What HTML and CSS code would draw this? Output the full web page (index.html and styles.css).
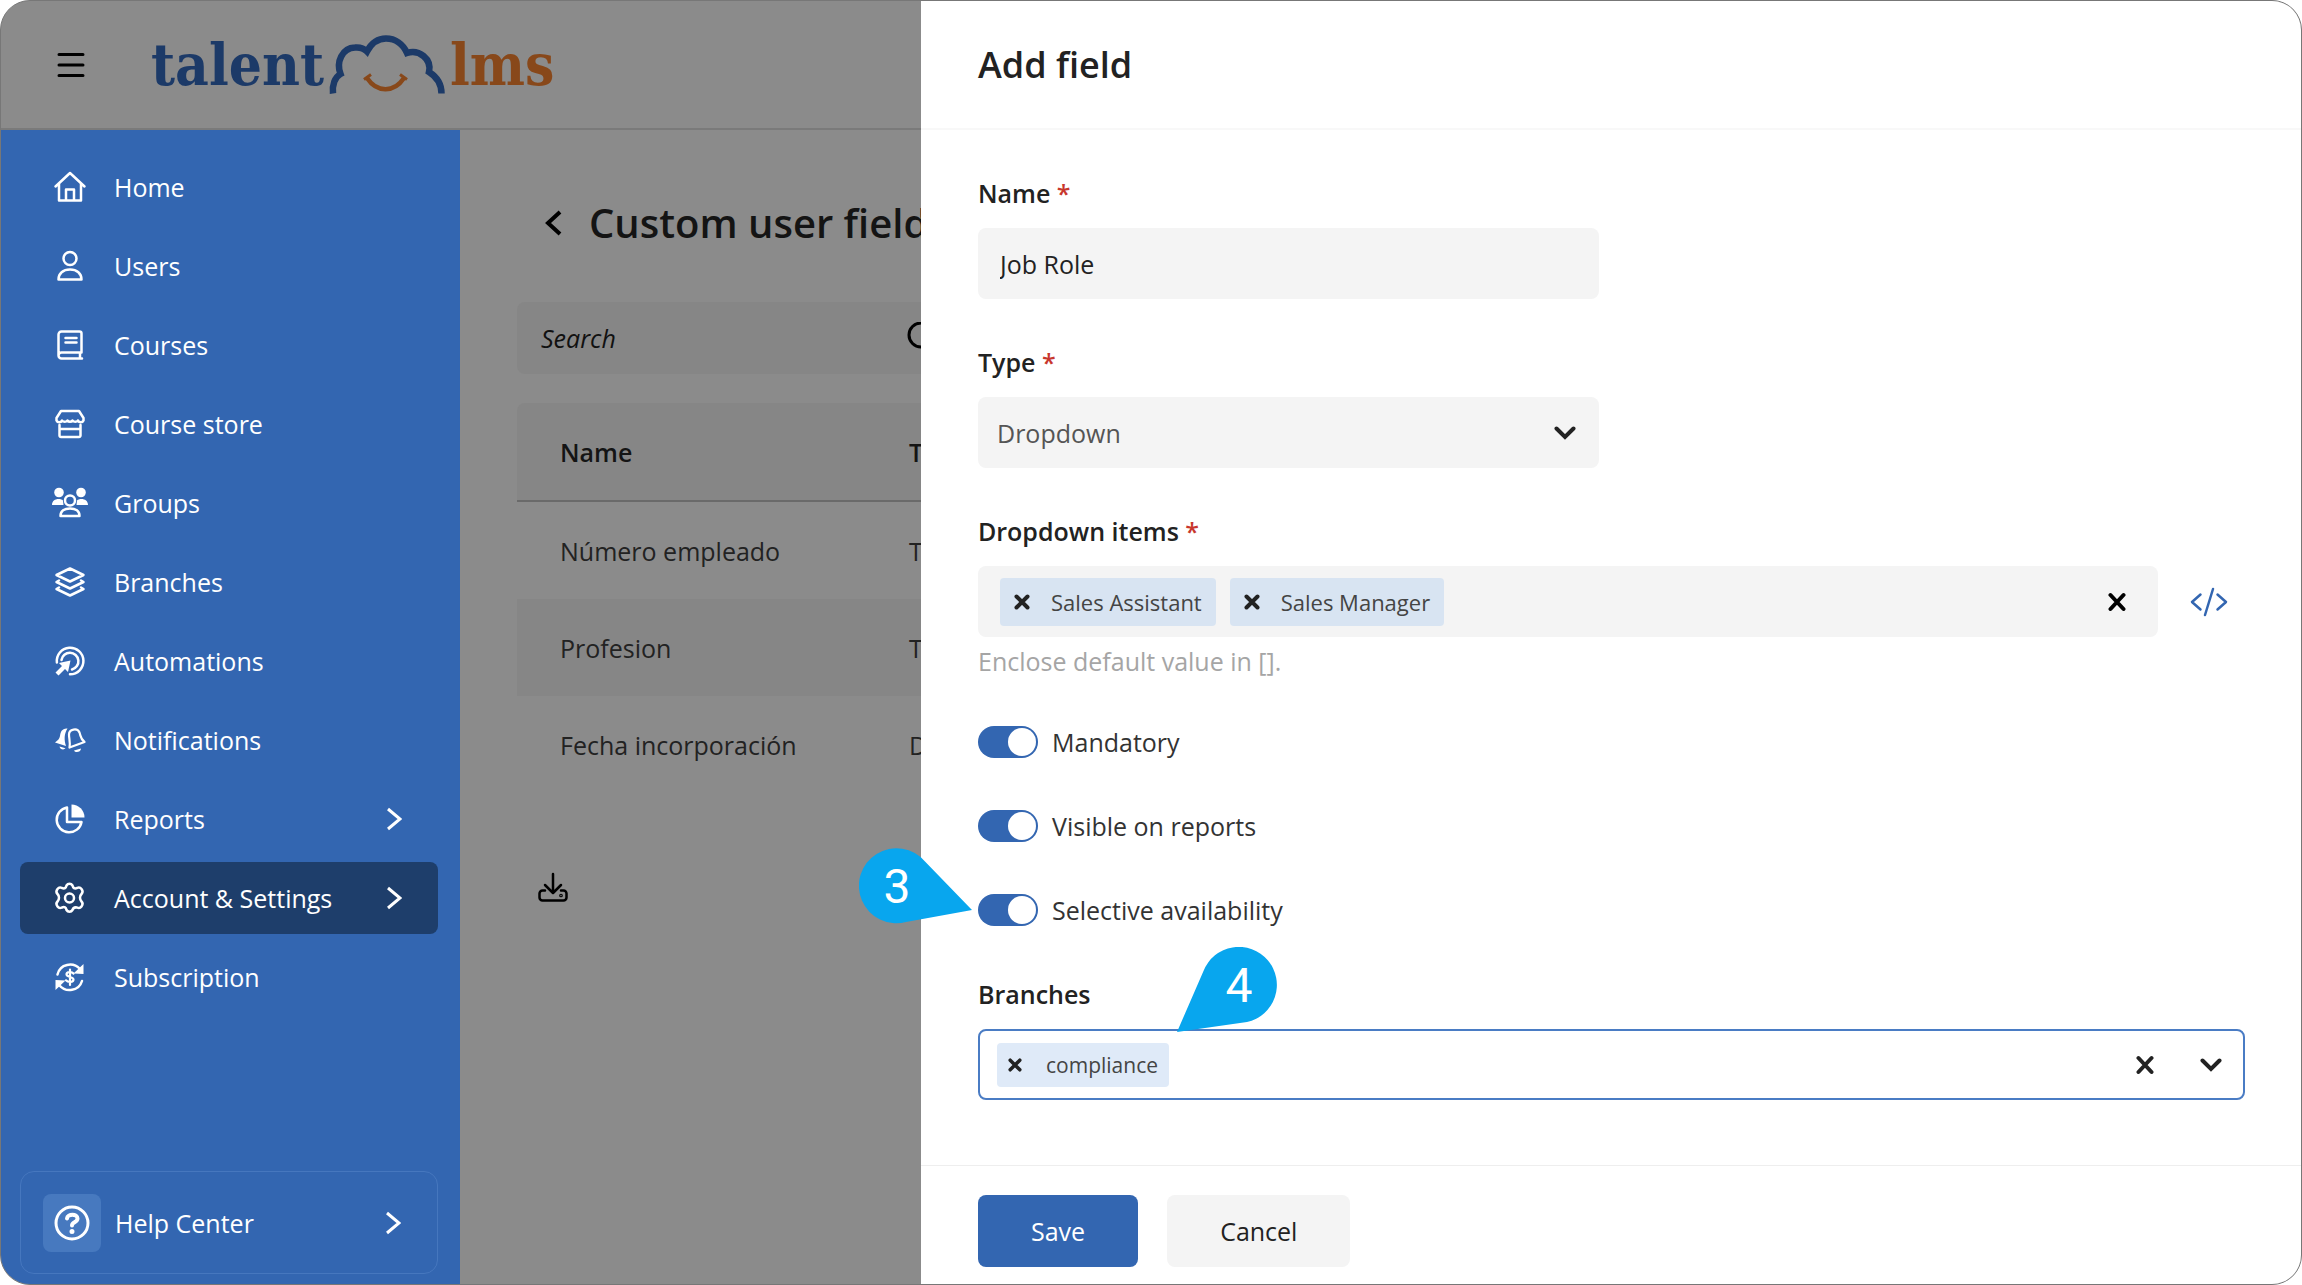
FILE: index.html
```html
<!DOCTYPE html>
<html lang="en">
<head>
    <meta charset="UTF-8">
    <meta name="viewport" content="width=device-width, initial-scale=1.0">
    <title>Custom user fields - TalentLMS</title>
    <link rel="stylesheet" href="styles.css">
</head>
<body>
    <div class="app">
        <header class="topbar">
            <button class="icon-btn" aria-label="Menu">
                <svg width="28" height="26" viewBox="0 0 28 26" fill="none" stroke="#000" stroke-width="3" stroke-linecap="round"><path d="M2 2.500h24M2 13h24M2 23.500h24"/></svg>
            </button>
            <a href="#" class="logo" aria-label="talentlms">
                <span class="logo-talent">talent</span>
                <svg width="120" height="60" viewBox="0 0 120 60" fill="none">
                    <path d="M6 58.500C5 50 8 42 13.500 39C9 27 15 13 28 12.500C33 12 37 13.500 40 16.500C45 7 52 3.500 59 3.500C68 3.500 76 9 80 18C92 14 105 24 102 37C110 42 114.500 49 114.500 58.500" stroke="#1c3a68" stroke-width="6.500"/>
                    <path d="M40 43C50 58 67 58 77 43" stroke="#88481a" stroke-width="4.500"/>
                    <path d="M37 44.500L44 39.500M80 44.500L73 39.500" stroke="#88481a" stroke-width="3"/>
                </svg>
                <span class="logo-lms">lms</span>
            </a>
        </header>

        <div class="body">
            <aside class="sidebar">
                <nav class="nav">
                    <a href="#" class="nav-item">
                        <svg class="nav-icon" viewBox="0 0 36 36"><path d="M3.500 17.500L18 4l14.500 13.500M7 15v16.500h22V15M14 31.500V20.500h8v11"/></svg>
                        <span>Home</span>
                    </a>
                    <a href="#" class="nav-item">
                        <svg class="nav-icon" viewBox="0 0 36 36"><circle cx="18" cy="10.500" r="6.500"/><path d="M6.500 31.500c0-6 4.500-10 11.500-10s11.500 4 11.500 10z"/></svg>
                        <span>Users</span>
                    </a>
                    <a href="#" class="nav-item">
                        <svg class="nav-icon" viewBox="0 0 36 36"><path d="M29.500 25.500V6.500a2 2 0 0 0-2-2h-18a3 3 0 0 0-3 3v21a3 3 0 0 0 3 3h20.500M29.500 25.500h-20a3 3 0 0 0-3 3M28 25.500v6M13.500 11h11M13.500 15.500h11"/></svg>
                        <span>Courses</span>
                    </a>
                    <a href="#" class="nav-item">
                        <svg class="nav-icon" viewBox="0 0 36 36"><path d="M9 5h18l4.500 7v2.500a3 3 0 0 1-5.500 0a3.500 3.500 0 0 1-5.500 0a3 3 0 0 1-5 0a3.500 3.500 0 0 1-5.500 0a3 3 0 0 1-5.500 0V12zM7.500 19v10.500a1.500 1.500 0 0 0 1.500 1.500h18a1.500 1.500 0 0 0 1.500-1.500V19M7.500 23h21"/></svg>
                        <span>Course store</span>
                    </a>
                    <a href="#" class="nav-item">
                        <svg class="nav-icon" viewBox="0 0 36 36"><g fill="#fff" stroke="none"><circle cx="7" cy="7.500" r="4.800"/><circle cx="29" cy="7.500" r="4.800"/><path d="M0 20c0-4 3-6 6.500-6c2 0 3.500.5 4.500 1.500L11.500 20zM36 20c0-4-3-6-6.500-6c-2 0-3.500.5-4.500 1.500L24.500 20z"/></g><circle cx="18" cy="15.500" r="5"/><path d="M8.500 31c0-5 4-7.500 9.500-7.500s9.500 2.500 9.500 7.500z"/></svg>
                        <span>Groups</span>
                    </a>
                    <a href="#" class="nav-item">
                        <svg class="nav-icon" viewBox="0 0 36 36"><path d="M18 4.500l13.500 6.500L18 17.500L4.500 11zM7 16.500l-2.500 1.500L18 24.500L31.500 18L29 16.500M7 23.500L4.500 25L18 31.500L31.500 25L29 23.500"/></svg>
                        <span>Branches</span>
                    </a>
                    <a href="#" class="nav-item">
                        <svg class="nav-icon" viewBox="0 0 36 36"><path d="M4.900 19.500A13.300 13.300 0 1 1 18 31.300M9.500 17a8.500 8.500 0 1 1 10.500 9.500"/><path d="M18.500 17.500L16 29l-3-3l-6.500 6.500l-3-3L10 23l-3-3z" fill="#fff" stroke="none"/></svg>
                        <span>Automations</span>
                    </a>
                    <a href="#" class="nav-item">
                        <svg class="nav-icon" viewBox="0 0 36 36"><path d="M15.500 6.500C10 6 8.500 10 8 14c-.5 3-2.500 4.500-5 6.500l11 3.500c-2-6-2-12 1.500-17.500zM7.500 24.500l6 1.800c-1.500 2-5.500 1.300-6-1.800zM22 28.500l7-2c0 3.500-5.500 5-7 2z" fill="#fff" stroke="none"/><path d="M17 12.500c0-5.500 8.500-7 10.500-2c1.500 4.500 1 6.500 5 9.500L17.500 25.500C18.500 20.500 17 16.500 17 12.500z" stroke-width="2.200"/></svg>
                        <span>Notifications</span>
                    </a>
                    <a href="#" class="nav-item">
                        <svg class="nav-icon" viewBox="0 0 36 36"><path d="M15 6.500A12.500 12.500 0 1 0 29.500 21H15z"/><path d="M19.500 3.500A13 13 0 0 1 32.500 16.500h-13z" fill="#fff" stroke="none"/></svg>
                        <span>Reports</span>
                        <svg class="nav-arrow" viewBox="0 0 16 24"><path d="M2 2l12 10L2 22"/></svg>
                    </a>
                    <a href="#" class="nav-item active">
                        <svg class="nav-icon" viewBox="0 0 36 36"><path d="M14.500 5.500a3.500 3.500 0 0 1 6 0c.5 2.500 2 3.500 4.500 2.500a3.500 3.500 0 0 1 4.500 1c1.500 2 1.500 3.500 0 5c-2 2-2 5.500 0 7.500c1.500 1.500 1.500 3 0 5a3.500 3.500 0 0 1-4.500 1c-2.500-.5-4 .5-4.500 2.500a3.500 3.500 0 0 1-6 0c-.5-2.500-2-3.500-4.500-2.500a3.500 3.500 0 0 1-4.500-1c-1.500-2-1.500-3.500 0-5c2-2 2-5.500 0-7.500c-1.500-1.500-1.500-3 0-5a3.500 3.500 0 0 1 4.500-1c2.500 1 4 0 4.500-2.500z"/><circle cx="17.500" cy="18" r="4.500"/></svg>
                        <span>Account &amp; Settings</span>
                        <svg class="nav-arrow" viewBox="0 0 16 24"><path d="M2 2l12 10L2 22"/></svg>
                    </a>
                    <a href="#" class="nav-item">
                        <svg class="nav-icon" viewBox="0 0 36 36"><path d="M5.500 15.500C8 5 21 2.500 28 10M30 22C27 32 14 34 7.500 26.500"/><path d="M31.500 5v10l-10-.5zM3.500 31V21l10 .5z" fill="#fff" stroke="none"/><path d="M21.500 14.500c-1.500-2-7-2-7 .8c0 3.200 7 2.200 7 5.200c0 3-5.500 3-7.500.8M18 10.500v15.500" stroke-width="2.200"/></svg>
                        <span>Subscription</span>
                    </a>
                </nav>
                <a href="#" class="help">
                    <span class="help-icon">
                        <svg width="36" height="36" viewBox="0 0 36 36" fill="none" stroke="#fff" stroke-linecap="round"><circle cx="18" cy="18" r="16" stroke-width="3"/><path d="M13 13.500c.5-5 10.500-5 10.500 0c0 4-5.500 3.500-5.500 7" stroke-width="4"/><circle cx="18" cy="26.500" r="1.500" fill="#fff" stroke-width="2"/></svg>
                    </span>
                    <span>Help Center</span>
                    <svg class="nav-arrow" viewBox="0 0 16 24"><path d="M2 2l12 10L2 22"/></svg>
                </a>
            </aside>

            <main class="content">
                <div class="page-title">
                    <button class="icon-btn" aria-label="Back">
                        <svg width="18" height="26" viewBox="0 0 18 26" fill="none" stroke="#000" stroke-width="4"><path d="M16 2L4 13l12 11"/></svg>
                    </button>
                    <h1>Custom user fields</h1>
                </div>
                <div class="search">
                    <input type="search" class="search-input" placeholder="Search" aria-label="Search">
                    <svg width="32" height="32" viewBox="0 0 32 32" fill="none" stroke="#000" stroke-width="3"><circle cx="14" cy="13" r="12"/><path d="M22 22l8 8"/></svg>
                </div>
                <table class="fields-table">
                    <thead>
                        <tr><th>Name</th><th>Type</th></tr>
                    </thead>
                    <tbody>
                        <tr><td>Número empleado</td><td>Text</td></tr>
                        <tr><td>Profesion</td><td>Text</td></tr>
                        <tr><td>Fecha incorporación</td><td>Date</td></tr>
                    </tbody>
                </table>
                <button class="icon-btn download" aria-label="Download">
                    <svg width="30" height="30" viewBox="0 0 30 30" fill="none" stroke="#000" stroke-width="2.500" stroke-linecap="round" stroke-linejoin="round"><path d="M15 2v18M7 13l8 8l8-8M7 18.500H4.500a3 3 0 0 0-3 3v4a3 3 0 0 0 3 3h21a3 3 0 0 0 3-3v-4a3 3 0 0 0-3-3H23"/><circle cx="23" cy="23.500" r=".6"/></svg>
                </button>
            </main>
        </div>

        <!-- Add field drawer -->
        <section class="drawer" role="dialog" aria-labelledby="drawerTitle">
            <div class="drawer-header">
                <h2 id="drawerTitle">Add field</h2>
            </div>
            <form class="drawer-body">
                <div class="field half">
                    <label for="name">Name <span class="required">*</span></label>
                    <input type="text" id="name" class="control" value="Job Role">
                </div>
                <div class="field half">
                    <label for="type">Type <span class="required">*</span></label>
                    <div class="select-wrap">
                        <select id="type" class="control">
                            <option>Dropdown</option>
                        </select>
                        <svg class="select-arrow" width="22" height="14" viewBox="0 0 22 14" fill="none" stroke="#222" stroke-width="4" stroke-linecap="round"><path d="M2.500 2.500L11 11l8.500-8.500"/></svg>
                    </div>
                </div>
                <div class="field">
                    <label for="items">Dropdown items <span class="required">*</span></label>
                    <div class="tag-row">
                        <div class="tag-box">
                            <span class="tag"><button type="button" class="icon-btn" aria-label="Remove Sales Assistant"><svg class="x-small" viewBox="0 0 16 16"><path d="M2.500 2.500l11 11M13.500 2.500l-11 11"/></svg></button>Sales Assistant</span>
                            <span class="tag"><button type="button" class="icon-btn" aria-label="Remove Sales Manager"><svg class="x-small" viewBox="0 0 16 16"><path d="M2.500 2.500l11 11M13.500 2.500l-11 11"/></svg></button>Sales Manager</span>
                            <input type="text" id="items" class="tag-input">
                            <button type="button" class="icon-btn clear" aria-label="Clear items"><svg class="x-large" viewBox="0 0 18 20"><path d="M2.500 3l13 14M15.500 3l-13 14"/></svg></button>
                        </div>
                        <button type="button" class="icon-btn code" aria-label="Edit as code">
                            <svg width="38" height="30" viewBox="0 0 38 30" fill="none" stroke="#3366b1" stroke-width="2.500" stroke-linecap="round" stroke-linejoin="round"><path d="M10.500 7.500L2 15l8.500 7.500M27.500 7.500L36 15l-8.500 7.500M23 2l-8 26"/></svg>
                        </button>
                    </div>
                    <p class="hint">Enclose default value in [].</p>
                </div>
                <label class="toggle"><input type="checkbox" checked><span>Mandatory</span></label>
                <label class="toggle"><input type="checkbox" checked><span>Visible on reports</span></label>
                <label class="toggle">
                    <input type="checkbox" checked><span>Selective availability</span>
                    <svg class="callout callout-3" width="113" height="76" viewBox="0 0 113 76" aria-hidden="true">
                        <path d="M113 62L66 13.500A37.500 37.500 0 1 0 47 74z" fill="#08a6ee"/>
                        <text x="38" y="55" text-anchor="middle">3</text>
                    </svg>
                </label>
                <div class="field branches">
                    <label for="branches">Branches</label>
                    <div class="tag-box focused">
                        <span class="tag"><button type="button" class="icon-btn" aria-label="Remove compliance"><svg class="x-small" viewBox="0 0 16 16"><path d="M2.500 2.500l11 11M13.500 2.500l-11 11"/></svg></button>compliance</span>
                        <input type="text" id="branches" class="tag-input">
                        <button type="button" class="icon-btn" aria-label="Clear branches"><svg class="x-large" viewBox="0 0 18 20"><path d="M2.500 3l13 14M15.500 3l-13 14"/></svg></button>
                        <button type="button" class="icon-btn" aria-label="Show branches"><svg width="22" height="14" viewBox="0 0 22 14" fill="none" stroke="#222" stroke-width="4" stroke-linecap="round"><path d="M2.500 2.500L11 11l8.500-8.500"/></svg></button>
                    </div>
                    <svg class="callout callout-4" width="102" height="85" viewBox="0 0 102 85" aria-hidden="true">
                        <path d="M0 85L26.500 24A38 38 0 1 1 70 75z" fill="#08a6ee"/>
                        <text x="62" y="55" text-anchor="middle">4</text>
                    </svg>
                </div>
            </form>
            <div class="drawer-footer">
                <button class="btn btn-save">Save</button>
                <button class="btn btn-cancel">Cancel</button>
            </div>
        </section>
    </div>
</body>
</html>
```
FILE: styles.css
```css
* {
    margin: 0;
    padding: 0;
    box-sizing: border-box;
}

body {
    background: #fff;
    color: #222;
    font-family: "Open Sans", "Noto Sans", sans-serif;
    font-size: 25px;
    line-height: 36px;
}

button,
input,
select {
    font: inherit;
    color: inherit;
    border: none;
    background: none;
}

a {
    color: inherit;
    text-decoration: none;
}

svg {
    flex: none;
}

.app {
    position: relative;
    display: flex;
    flex-direction: column;
    min-height: 100vh;
    background: #8b8b8b;
    border: 1px solid #777;
    border-radius: 30px;
    overflow: hidden;
}

.icon-btn {
    display: flex;
    align-items: center;
    justify-content: center;
    cursor: pointer;
}

/* Top bar */
.topbar {
    display: flex;
    align-items: center;
    gap: 66px;
    height: 129px;
    padding: 0 56px;
    border-bottom: 2px solid #7a7a7a;
}

.logo {
    display: flex;
    align-items: center;
    gap: 3px;
    font-family: "DejaVu Serif Condensed", "DejaVu Serif", serif;
    font-weight: 700;
    font-size: 58px;
    line-height: 64px;
}

.logo-talent {
    color: #1c3a68;
}

.logo-lms {
    color: #88481a;
}

.body {
    flex: 1;
    display: flex;
}

/* Sidebar */
.sidebar {
    flex: none;
    display: flex;
    flex-direction: column;
    justify-content: space-between;
    width: calc(20% - 1px);
    padding: 21px 22px 10px 19px;
    background: #3366b1;
    color: #fff;
}

.nav {
    display: flex;
    flex-direction: column;
    gap: 7px;
}

.nav-item {
    display: flex;
    align-items: center;
    gap: 26px;
    height: 72px;
    padding: 0 36px 0 32px;
    border-radius: 8px;
}

.nav-item.active {
    background: #1e3e6b;
}

.nav-icon {
    width: 36px;
    height: 36px;
    fill: none;
    stroke: #fff;
    stroke-width: 2.5;
    stroke-linejoin: round;
    stroke-linecap: round;
}

.nav-arrow {
    width: 16px;
    height: 24px;
    margin-left: auto;
    fill: none;
    stroke: #fff;
    stroke-width: 3;
}

.help {
    display: flex;
    align-items: center;
    gap: 14px;
    height: 103px;
    padding: 0 36px 0 22px;
    border: 1px solid #4677be;
    border-radius: 14px;
}

.help-icon {
    display: flex;
    align-items: center;
    justify-content: center;
    width: 58px;
    height: 58px;
    background: #4779bf;
    border-radius: 8px;
}

/* Custom fields page */
.content {
    flex: 1;
    padding: 63px 57px;
}

.page-title {
    display: flex;
    align-items: center;
    gap: 27px;
    height: 60px;
    margin-bottom: 49px;
    padding-left: 27px;
}

.page-title h1 {
    font-size: 40px;
    font-weight: 600;
    line-height: 60px;
    color: #141414;
}

.search {
    display: flex;
    align-items: center;
    width: 446px;
    height: 72px;
    padding: 0 24px;
    background: #868686;
    border-radius: 8px;
}

.search-input {
    flex: 1;
    min-width: 0;
    font-style: italic;
}

.search-input::placeholder {
    color: #111;
}

.fields-table {
    width: 100%;
    margin-top: 29px;
    border-collapse: separate;
    border-spacing: 0;
    table-layout: fixed;
    color: #222;
}

.fields-table th,
.fields-table td {
    height: 97px;
    padding: 0 43px;
    text-align: left;
}

.fields-table th:first-child {
    width: 349px;
    border-top-left-radius: 8px;
}

.fields-table th {
    height: 99px;
    font-weight: 600;
    color: #141414;
    background: #868686;
    border-bottom: 2px solid #6a6a6a;
}

.fields-table tbody tr:nth-child(even) {
    background: #868686;
}

.download {
    margin: 79px 0 0 21px;
}

/* Drawer */
.drawer {
    position: absolute;
    top: 0;
    right: 0;
    bottom: 0;
    display: flex;
    flex-direction: column;
    width: 60%;
    background: #fff;
}

.drawer-header {
    display: flex;
    align-items: center;
    height: 129px;
    padding: 0 57px;
    border-bottom: 2px solid #f8f8f8;
}

.drawer-header h2 {
    font-size: 36px;
    font-weight: 600;
}

.drawer-body {
    flex: 1;
    padding: 45px 56px 0 57px;
}

.field {
    margin-bottom: 45px;
}

.field.half {
    width: 49%;
}

.field label {
    display: block;
    margin-bottom: 17px;
    font-weight: 600;
}

.required {
    color: #c8372d;
}

.control {
    display: block;
    width: 100%;
    height: 71px;
    padding: 0 22px;
    background: #f4f4f4;
    border-radius: 8px;
}

.select-wrap {
    position: relative;
}

select.control {
    appearance: none;
    padding: 0 19px;
    color: #555;
}

.select-arrow {
    position: absolute;
    top: 29px;
    right: 23px;
    pointer-events: none;
}

.tag-row {
    display: flex;
    align-items: center;
    gap: 32px;
}

.tag-box {
    flex: 1;
    display: flex;
    align-items: center;
    gap: 14px;
    height: 71px;
    padding: 0 32px 0 22px;
    background: #f4f4f4;
    border-radius: 8px;
}

.tag {
    display: flex;
    align-items: center;
    gap: 21px;
    height: 48px;
    padding: 0 14px;
    background: #d8e4f2;
    border-radius: 4px;
    font-size: 22px;
    color: #444;
}

.tag-input {
    flex: 1;
    min-width: 0;
}

.x-small,
.x-large {
    width: 16px;
    height: 16px;
    fill: none;
    stroke: #222;
    stroke-width: 4;
    stroke-linecap: round;
}

.x-large {
    width: 18px;
    height: 20px;
}

.clear svg {
    stroke: #000;
}

.code {
    margin-right: 17px;
}

.hint {
    margin-top: 6px;
    color: #a5a5a5;
}

.toggle {
    position: relative;
    display: flex;
    align-items: center;
    gap: 14px;
    margin-bottom: 48px;
    color: #333;
}

.toggle input {
    appearance: none;
    display: flex;
    justify-content: flex-end;
    align-items: center;
    width: 60px;
    height: 32px;
    padding: 2px;
    background: #3366b1;
    border-radius: 16px;
}

.toggle input::before {
    content: "";
    width: 28px;
    height: 28px;
    background: #fff;
    border-radius: 50%;
}

.branches {
    position: relative;
}

.tag-box.focused {
    gap: 46px;
    padding: 0 21px 0 17px;
    background: #fff;
    border: 2px solid #4a7cc4;
}

.focused .tag {
    gap: 24px;
    height: 44px;
    padding: 0 11px;
    background: #dfeaf8;
    font-size: 21px;
}

.focused .x-small {
    width: 14px;
    height: 14px;
}

/* Step callouts */
.callout {
    position: absolute;
    fill: #fff;
    font-family: Roboto, sans-serif;
    font-size: 48px;
}

.callout-3 {
    top: -44px;
    left: -119px;
}

.callout-4 {
    top: -29px;
    left: 199px;
}

.drawer-footer {
    display: flex;
    gap: 29px;
    padding: 29px 57px 17px;
    border-top: 1px solid #eee;
}

.btn {
    height: 72px;
    padding: 0 53px;
    border-radius: 8px;
    cursor: pointer;
}

.btn-save {
    background: #3366b1;
    color: #fff;
}

.btn-cancel {
    background: #f4f4f4;
    color: #222;
}
```
